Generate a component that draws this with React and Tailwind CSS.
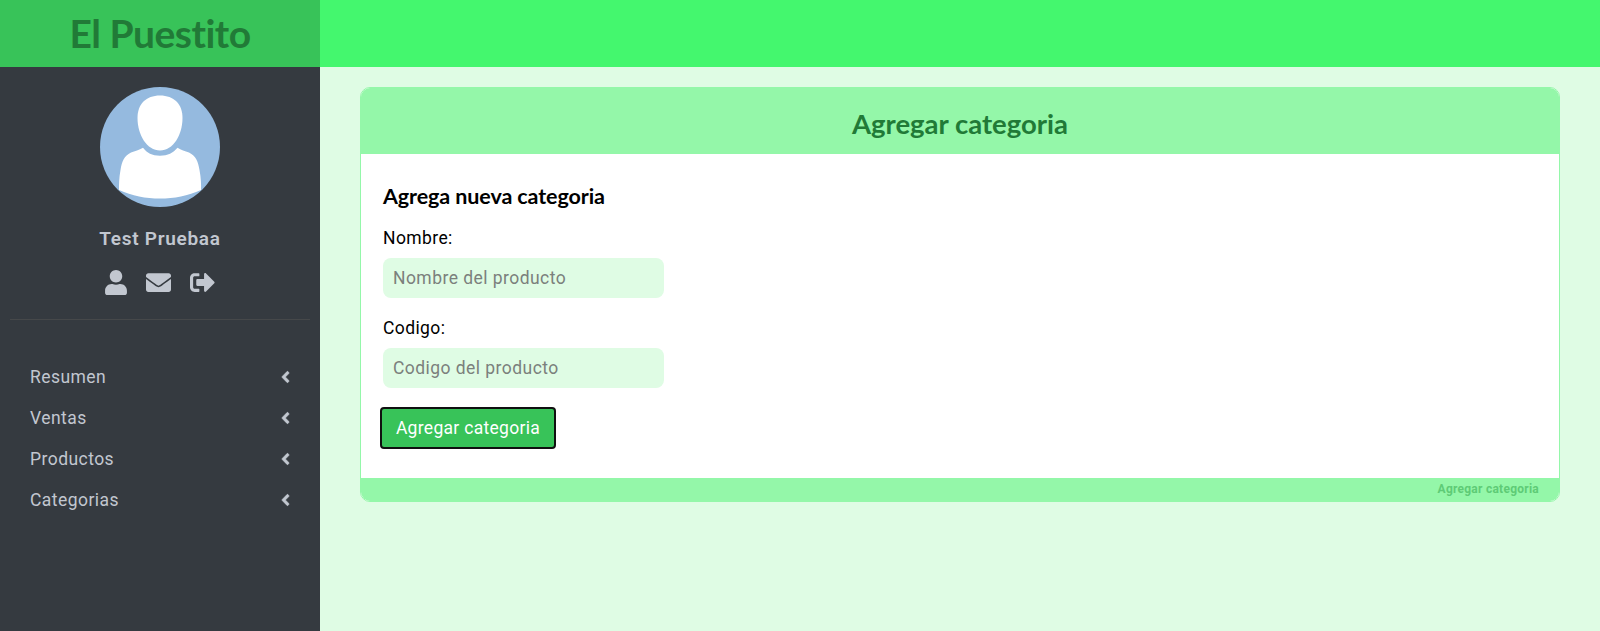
import React from "react";
import { FaUser, FaEnvelope, FaSignOutAlt, FaAngleLeft } from "react-icons/fa";

const menu = ["Resumen", "Ventas", "Productos", "Categorias"];

function Avatar() {
  return (
    <svg viewBox="0 0 120 120" className="h-[120px] w-[120px]">
      <circle cx="60" cy="60" r="60" fill="#95badf" />
      <path
        fill="#fff"
        d="M60 8.5C74 8.5 82.500 17 82.500 31C82.500 48 73 63.500 60 63.500S37.500 48 37.500 31C37.500 17 46 8.500 60 8.500Z"
      />
      <path
        fill="#fff"
        d="M43 60.700C47 66 52 68.700 60 68.700S73 66 77.500 60.700C81 63 85 64 89 65.500C96 69 98 74 99.500 83C101 91 101.300 98 101 103C88 109 74 111.500 60 111.500S32 109 19 103C19 98 19 91 20.500 83C22 74 24 69 31 65.500C35 64 39 63 43 60.700Z"
      />
    </svg>
  );
}

function Sidebar() {
  return (
    <aside className="flex w-80 shrink-0 flex-col bg-[#353a40] text-[#c2c7d0]">
      <div className="flex h-[67px] items-center justify-center bg-[#38c359]">
        <h1 className="font-['Lato',sans-serif] text-[39px] leading-none font-bold tracking-[-0.5px] whitespace-nowrap text-[#217a37] [font-variant-ligatures:none]">
          El Puestito
        </h1>
      </div>
      <div className="mx-2.5 flex h-[253px] flex-col items-center border-b border-[#46484a] pt-5">
        <Avatar />
        <p className="mt-[18px] text-[19px] leading-7 font-semibold tracking-[0.7px]">Test Pruebaa</p>
        <div className="mt-[17px] flex items-center gap-[19px]">
          <FaUser className="h-[25px] w-[22px]" />
          <FaEnvelope className="h-[25px] w-[25px]" />
          <FaSignOutAlt className="h-[25px] w-[25px]" />
        </div>
      </div>
      <nav className="mt-[37px] flex flex-col">
        {menu.map((item) => (
          <a key={item} className="flex h-[40.8px] items-center justify-between pr-[27px] pl-[30px]">
            <span className="text-[17.5px] leading-6 tracking-[0.45px]">{item}</span>
            <FaAngleLeft className="h-[18px] w-[15px]" stroke="currentColor" strokeWidth="12" />
          </a>
        ))}
      </nav>
    </aside>
  );
}

function Field({ label, placeholder }) {
  return (
    <label className="flex flex-col">
      <span className="text-[17.5px] leading-6 tracking-[0.4px]">{label}</span>
      <input
        placeholder={placeholder}
        className="mt-2 h-10 w-[281px] rounded-lg bg-[#dffce4] px-2.5 text-[17.5px] tracking-[0.45px] placeholder:text-[#7b807c]"
      />
    </label>
  );
}

export default function App() {
  return (
    <div className="flex h-[631px] w-[1600px] overflow-hidden bg-[#dffce4] font-['Roboto',sans-serif] text-black">
      <Sidebar />
      <div className="flex flex-1 flex-col">
        <header className="h-[67px] bg-[#44f76e]" />
        <main className="px-10 pt-5">
          <section className="flex h-[415px] flex-col overflow-hidden rounded-[10px] border border-[#94f7a9] bg-white">
            <div className="flex h-[66px] items-center justify-center bg-[#94f7a9] pt-[5px]">
              <h2 className="font-['Lato',sans-serif] text-[27.5px] leading-none font-bold text-[#217a37]">
                Agregar categoria
              </h2>
            </div>
            <form className="flex flex-1 flex-col items-start pt-[29px] pl-[22px]">
              <h3 className="font-['Lato',sans-serif] text-[21.5px] leading-[26px] font-bold tracking-[-0.1px]">
                Agrega nueva categoria
              </h3>
              <div className="mt-[17px] flex flex-col gap-[18px]">
                <Field label="Nombre:" placeholder="Nombre del producto" />
                <Field label="Codigo:" placeholder="Codigo del producto" />
              </div>
              <button
                type="button"
                className="mt-[19px] -ml-[3px] h-[42px] w-44 rounded border-2 border-[#101010] bg-[#38c359] text-[17.5px] tracking-[0.3px] whitespace-nowrap text-white"
              >
                Agregar categoria
              </button>
            </form>
            <footer className="flex h-[23px] items-center justify-end bg-[#94f7a9] pr-5 pb-px text-[12px] font-bold tracking-[0.25px] text-[#5ecb76]">
              Agregar categoria
            </footer>
          </section>
        </main>
      </div>
    </div>
  );
}
